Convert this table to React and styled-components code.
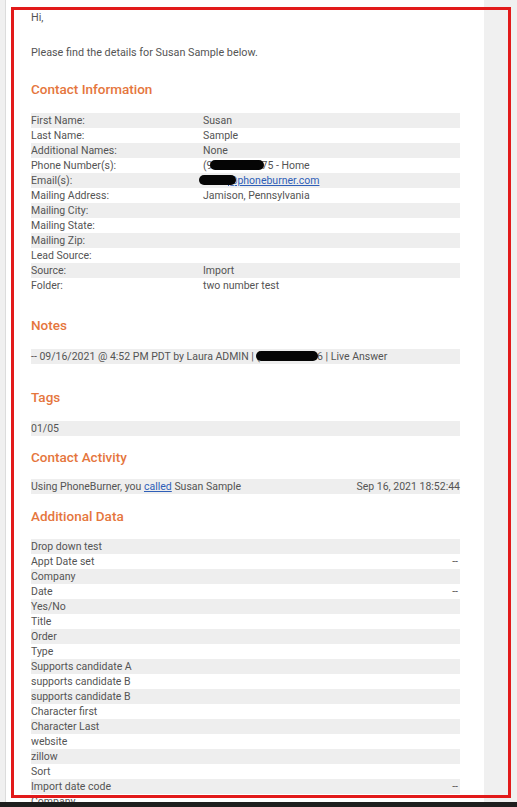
import React from "react";
import styled, { createGlobalStyle } from "styled-components";

const Global = createGlobalStyle`
  html, body { margin: 0; padding: 0; }
  body {
    background: #f0f0f0;
    overflow: hidden;
    height: 807px;
    font-family: Roboto, "Liberation Sans", Arial, sans-serif;
  }
`;

const Page = styled.div`
  display: flex;
  align-items: flex-start;
  height: 807px;
  overflow: hidden;
`;

const Panel = styled.main`
  margin-left: 5px;
  width: 479px;
  min-height: 900px;
  background: #fff;
  border-left: 1px solid #dcdcdc;
  padding: 10px 24px 0 25px;
  box-sizing: border-box;
  color: #545454;
  font-size: 10.5px;
  line-height: 15px;
`;

const Para = styled.p`
  margin: ${(p) => p.$top || 0}px 0 0;
  font-size: 10.8px;
  line-height: 15px;
`;

const Section = styled.section`
  margin-top: ${(p) => p.$gap}px;
`;

const Heading = styled.h2`
  margin: 0 0 ${(p) => p.$after || 13}px;
  font-size: 13.5px;
  line-height: 20px;
  font-weight: 500;
  color: #e5763d;
`;

const Table = styled.div`
  display: flex;
  flex-direction: column;
`;

const Row = styled.div`
  display: grid;
  grid-template-columns: ${(p) => p.$cols || "172px 1fr"};
  height: 15px;
  line-height: 15px;
  white-space: nowrap;
  &:nth-child(odd) {
    background: #eeeeee;
  }
`;

const Value = styled.span`
  text-align: ${(p) => (p.$right ? "right" : "left")};
  padding-right: ${(p) => p.$pr || 0}px;
`;

const Link = styled.a`
  color: #2f5fb8;
  text-decoration: underline;
`;

const Redact = styled.span`
  display: inline-block;
  width: ${(p) => p.$w}px;
  height: 10px;
  margin-left: ${(p) => p.$ml || 0}px;
  margin-right: ${(p) => p.$mr || 0}px;
  background: #050505;
  border-radius: 5px;
  vertical-align: -1px;
  position: relative;
`;

const Frame = styled.div`
  position: fixed;
  left: 11px;
  top: 7px;
  width: 500px;
  height: 791px;
  box-sizing: border-box;
  border: 3px solid #e21a1a;
  pointer-events: none;
`;

const BottomBar = styled.div`
  position: fixed;
  left: 0;
  right: 0;
  bottom: 0;
  height: 5px;
  background: #1e1e1e;
`;

const contact = [
  ["First Name:", "Susan"],
  ["Last Name:", "Sample"],
  ["Additional Names:", "None"],
  ["Phone Number(s):", "phone"],
  ["Email(s):", "email"],
  ["Mailing Address:", "Jamison, Pennsylvania"],
  ["Mailing City:", ""],
  ["Mailing State:", ""],
  ["Mailing Zip:", ""],
  ["Lead Source:", ""],
  ["Source:", "Import"],
  ["Folder:", "two number test"],
];

const additional = [
  ["Drop down test", ""],
  ["Appt Date set", "--"],
  ["Company", ""],
  ["Date", "--"],
  ["Yes/No", ""],
  ["Title", ""],
  ["Order", ""],
  ["Type", ""],
  ["Supports candidate A", ""],
  ["supports candidate B", ""],
  ["supports candidate B", ""],
  ["Character first", ""],
  ["Character Last", ""],
  ["website", ""],
  ["zillow", ""],
  ["Sort", ""],
  ["Import date code", "--"],
  ["Company", ""],
];

function renderValue(v) {
  if (v === "phone")
    return (
      <>
        (9<Redact $w={54} $ml={-3} $mr={-2} />75 - Home
      </>
    );
  if (v === "email")
    return (
      <>
        <Redact $w={37} $ml={-4} $mr={-8} />
        <Link href="#">@phoneburner.com</Link>
      </>
    );
  return v;
}

export default function App() {
  return (
    <>
      <Global />
      <Page>
        <Panel>
          <Para>Hi,</Para>
          <Para $top={20}>Please find the details for Susan Sample below.</Para>

          <Section $gap={19}>
            <Heading $after={14}>Contact Information</Heading>
            <Table>
              {contact.map(([k, v], i) => (
                <Row key={i}>
                  <span>{k}</span>
                  <Value>{renderValue(v)}</Value>
                </Row>
              ))}
            </Table>
          </Section>

          <Section $gap={22}>
            <Heading $after={14}>Notes</Heading>
            <Table>
              <Row $cols="1fr">
                <span>
                  -- 09/16/2021 @ 4:52 PM PDT by Laura ADMIN | (
                  <Redact $w={62} $ml={-4} $mr={-1} />6 | Live Answer
                </span>
              </Row>
            </Table>
          </Section>

          <Section $gap={23}>
            <Heading $after={14}>Tags</Heading>
            <Table>
              <Row $cols="1fr">
                <span>01/05</span>
              </Row>
            </Table>
          </Section>

          <Section $gap={11}>
            <Heading $after={12}>Contact Activity</Heading>
            <Table>
              <Row $cols="1fr auto">
                <span>
                  Using PhoneBurner, you <Link href="#">called</Link> Susan Sample
                </span>
                <Value $right>Sep 16, 2021 18:52:44</Value>
              </Row>
            </Table>
          </Section>

          <Section $gap={12}>
            <Heading $after={13}>Additional Data</Heading>
            <Table>
              {additional.map(([k, v], i) => (
                <Row key={i} $cols="1fr auto">
                  <span>{k}</span>
                  <Value $right $pr={2}>{v}</Value>
                </Row>
              ))}
            </Table>
          </Section>
        </Panel>
      </Page>
      <Frame />
      <BottomBar />
    </>
  );
}
